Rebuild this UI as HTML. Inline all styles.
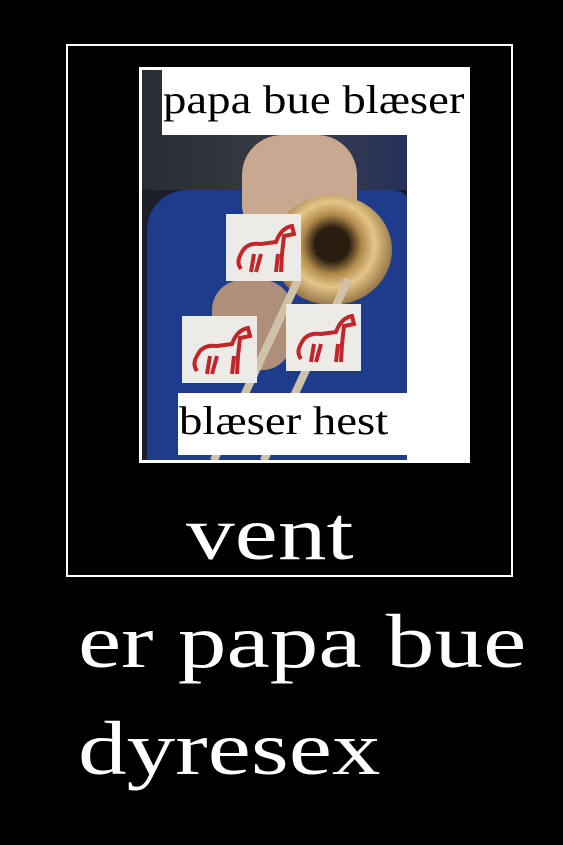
<!DOCTYPE html>
<html><head><meta charset="utf-8"><style>
*{margin:0;padding:0}
body{width:563px;height:845px;background:#000;position:relative;overflow:hidden;font-family:"Liberation Serif",serif}
.a{position:absolute}
.t{color:#fff;font-size:76px;line-height:1;white-space:nowrap;transform-origin:0 0;transform:scaleX(1.28)}
.s{font-size:40px;color:#000;white-space:nowrap;line-height:1;transform-origin:0 0;transform:scaleX(1.17)}
.horse{background:#ecebe8}
</style></head><body>
<div class="a" style="left:66px;top:44px;width:443px;height:529px;border:2px solid #fff"></div>
<div class="a" style="left:139px;top:67px;width:331px;height:396px;background:#fff"></div>
<div class="a" style="left:142px;top:70px;width:265px;height:390px;background:#1c1f2a;overflow:hidden">
  <div class="a" style="left:0;top:0;width:265px;height:120px;background:linear-gradient(90deg,#2a2c33,#3a3d48 60%,#25305a)"></div>
  <div class="a" style="left:5px;top:120px;width:265px;height:280px;background:#1f3b8c;border-radius:40px 20px 0 0"></div>
  <div class="a" style="left:100px;top:65px;width:115px;height:100px;background:#c9a891;border-radius:40px 40px 30px 30px"></div>
  <div class="a" style="left:70px;top:210px;width:80px;height:90px;background:#b08f7a;border-radius:30px"></div>
  <div class="a" style="left:130px;top:125px;width:120px;height:110px;background:radial-gradient(circle at 50% 45%,#2a1d10 20%,#b08a4a 35%,#e6c58a 50%,#8a6a3a 75%);border-radius:50%"></div>
  <div class="a" style="left:110px;top:200px;width:8px;height:200px;background:#cfc2a8;transform:rotate(25deg)"></div>
  <div class="a" style="left:160px;top:200px;width:8px;height:200px;background:#cfc2a8;transform:rotate(25deg)"></div>
</div>
<div class="a" style="left:162px;top:70px;width:308px;height:65px;background:#fff"></div>
<div class="a s" style="left:163px;top:80px">papa bue blæser</div>
<div class="a" style="left:178px;top:393px;width:229px;height:62px;background:#fff"></div>
<div class="a s" style="left:179px;top:401px">blæser hest</div>
<div class="a horse" style="left:226px;top:214px;width:75px;height:67px"><svg width="75" height="67"><path d="M15 40 Q20 28 35 30 L50 28 Q55 14 66 12 L68 20 L58 22 L56 40 L55 58 M52 40 L50 58 M35 40 L30 58 M28 40 L25 58 M15 40 Q10 48 15 55" stroke="#c0262a" stroke-width="4" fill="none"/></svg></div>
<div class="a horse" style="left:182px;top:316px;width:75px;height:67px"><svg width="75" height="67"><path d="M15 40 Q20 28 35 30 L50 28 Q55 14 66 12 L68 20 L58 22 L56 40 L55 58 M52 40 L50 58 M35 40 L30 58 M28 40 L25 58 M15 40 Q10 48 15 55" stroke="#c0262a" stroke-width="4" fill="none"/></svg></div>
<div class="a horse" style="left:286px;top:304px;width:75px;height:67px"><svg width="75" height="67"><path d="M15 40 Q20 28 35 30 L50 28 Q55 14 66 12 L68 20 L58 22 L56 40 L55 58 M52 40 L50 58 M35 40 L30 58 M28 40 L25 58 M15 40 Q10 48 15 55" stroke="#c0262a" stroke-width="4" fill="none"/></svg></div>
<div class="a t" style="left:186px;top:496px">vent</div>
<div class="a t" style="left:78px;top:604px">er papa bue</div>
<div class="a t" style="left:78px;top:711px">dyresex</div>
</body></html>
